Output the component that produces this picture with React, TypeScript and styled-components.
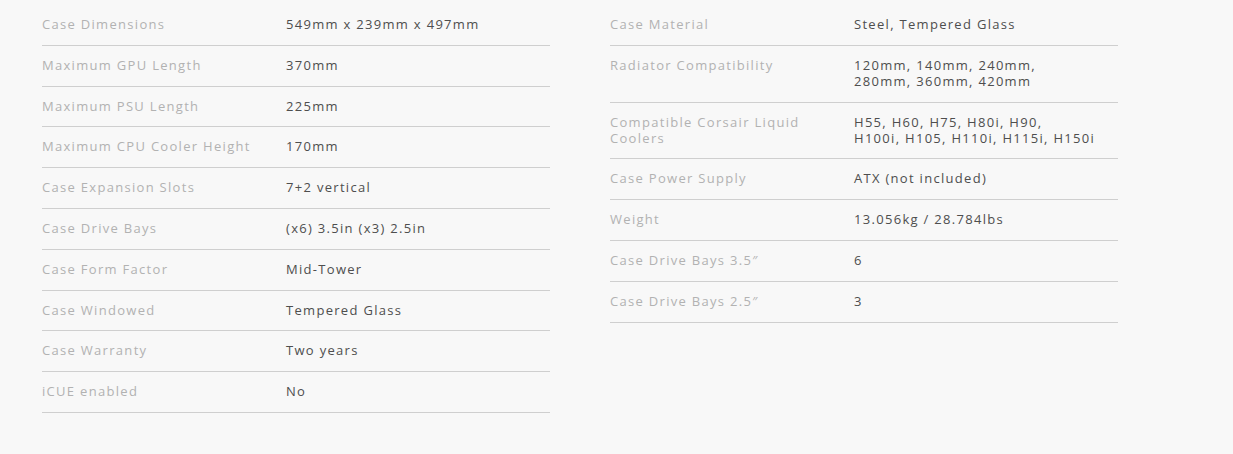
import React from "react";
import styled, { createGlobalStyle } from "styled-components";

const GlobalStyle = createGlobalStyle`
  html, body {
    margin: 0;
    padding: 0;
    background: #f8f8f8;
  }
`;

const left: [string, string][] = [
  ["Case Dimensions", "549mm x 239mm x 497mm"],
  ["Maximum GPU Length", "370mm"],
  ["Maximum PSU Length", "225mm"],
  ["Maximum CPU Cooler Height", "170mm"],
  ["Case Expansion Slots", "7+2 vertical"],
  ["Case Drive Bays", "(x6) 3.5in (x3) 2.5in"],
  ["Case Form Factor", "Mid-Tower"],
  ["Case Windowed", "Tempered Glass"],
  ["Case Warranty", "Two years"],
  ["iCUE enabled", "No"],
];

const right: [string, string][] = [
  ["Case Material", "Steel, Tempered Glass"],
  ["Radiator Compatibility", "120mm, 140mm, 240mm,\n280mm, 360mm, 420mm"],
  ["Compatible Corsair Liquid Coolers", "H55, H60, H75, H80i, H90,\nH100i, H105, H110i, H115i, H150i"],
  ["Case Power Supply", "ATX (not included)"],
  ["Weight", "13.056kg / 28.784lbs"],
  ["Case Drive Bays 3.5\u2033", "6"],
  ["Case Drive Bays 2.5\u2033", "3"],
];

export default function App() {
  return (
    <>
      <GlobalStyle />
      <Page>
        <SpecList>
          {left.map(([k, v]) => (
            <Row key={k}>
              <Label>{k}</Label>
              <Value>{v}</Value>
            </Row>
          ))}
        </SpecList>
        <SpecList>
          {right.map(([k, v]) => (
            <Row key={k}>
              <Label>{k}</Label>
              <Value>{v}</Value>
            </Row>
          ))}
        </SpecList>
      </Page>
    </>
  );
}

const Page = styled.div`
  display: grid;
  grid-template-columns: 508px 508px;
  column-gap: 60px;
  align-items: start;
  padding: 5px 0 0 42px;
  height: 454px;
  box-sizing: border-box;
  background: #f8f8f8;
  font-family: "Open Sans", "Liberation Sans", sans-serif;
  font-size: 13px;
  line-height: 16px;
  letter-spacing: 1.3px;
`;

const SpecList = styled.div`
  display: flex;
  flex-direction: column;
`;

const Row = styled.div`
  display: grid;
  grid-template-columns: 244px 1fr;
  padding: 11px 0 12.8px;
  border-bottom: 1px solid #cfcfcf;
`;

const Label = styled.div`
  color: #b2b2b2;
  padding-right: 20px;
`;

const Value = styled.div`
  color: #4e4e4e;
  white-space: pre-line;
`;
